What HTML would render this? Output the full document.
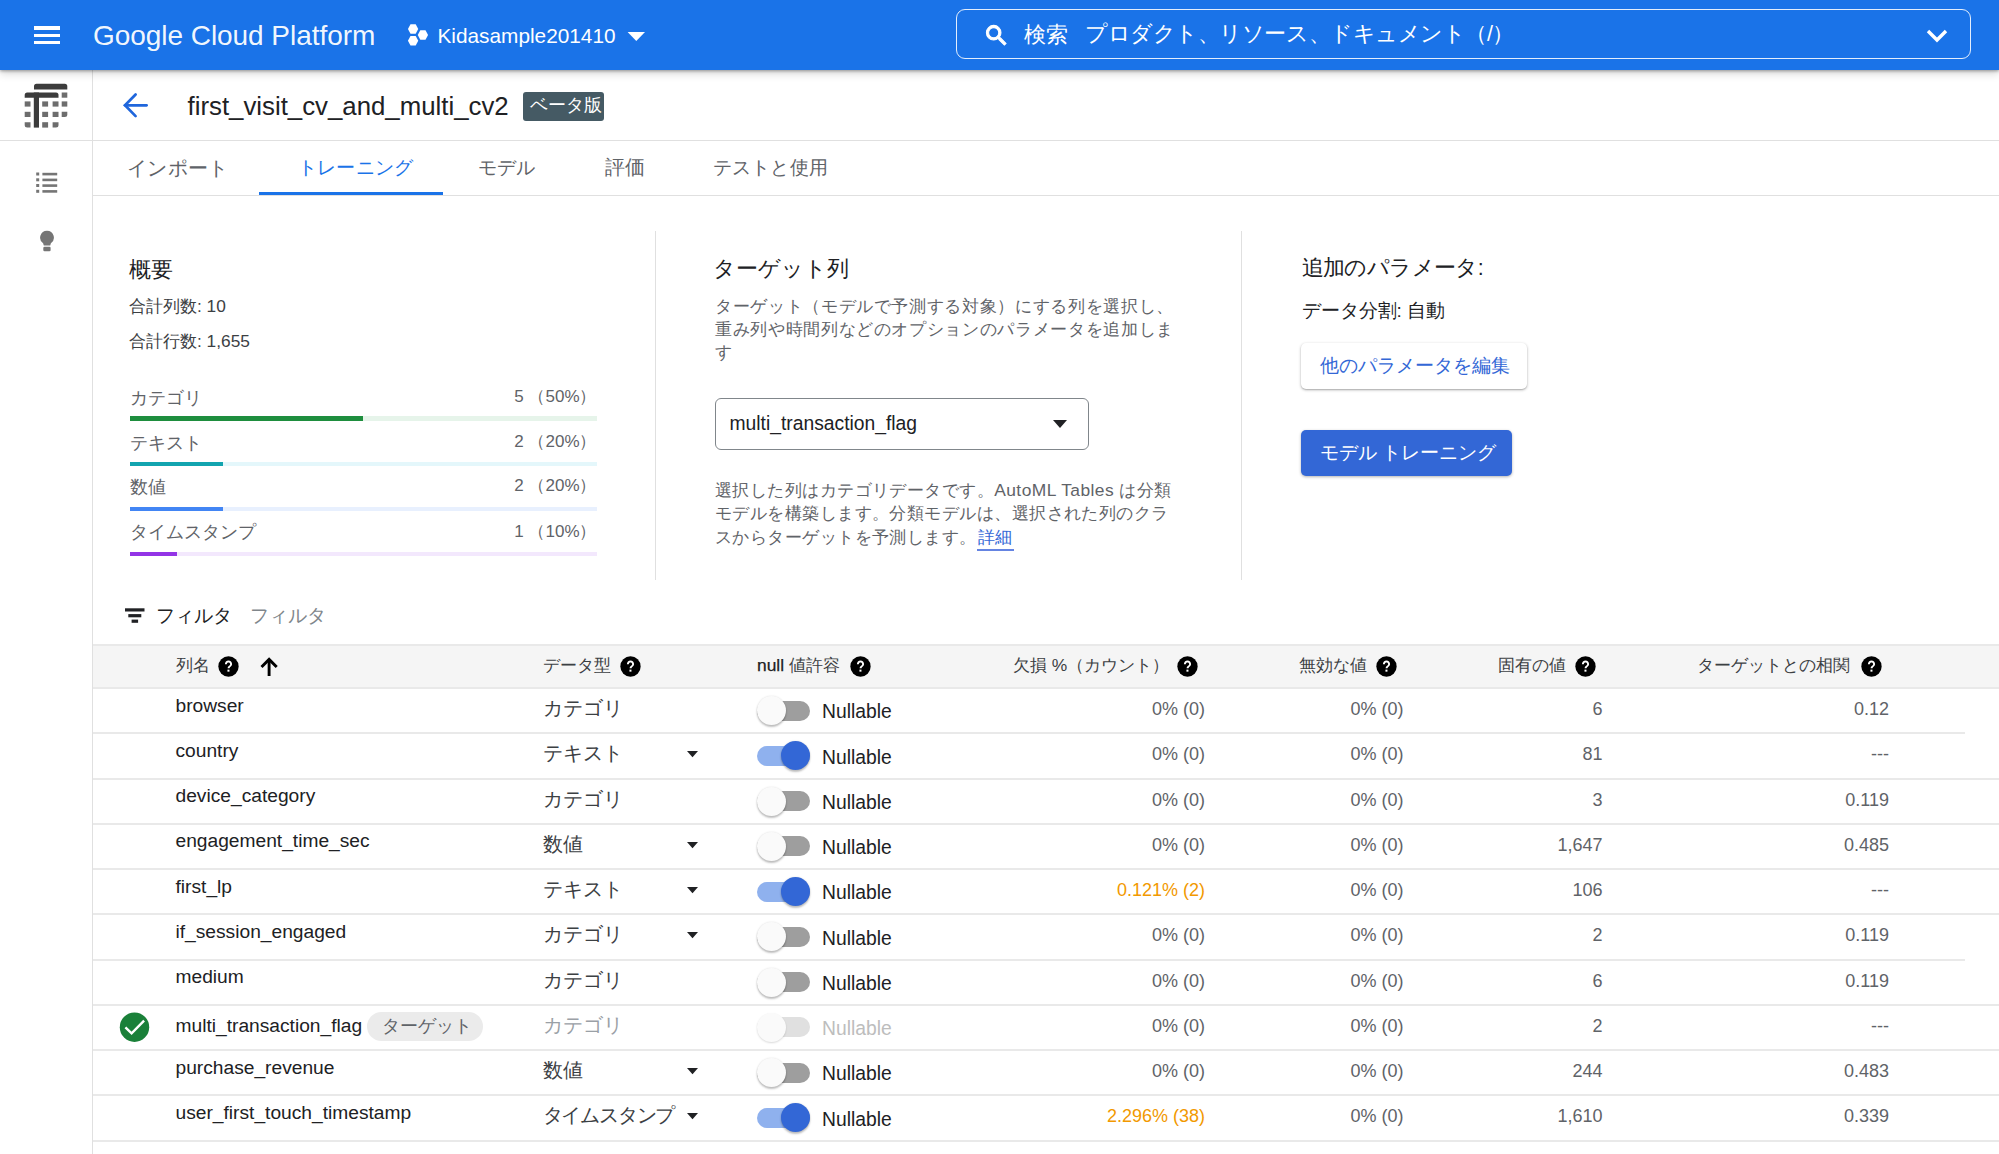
<!DOCTYPE html>
<html lang="ja"><head><meta charset="utf-8"><title>AutoML Tables</title>
<style>
html,body{margin:0;padding:0;width:1999px;height:1154px;overflow:hidden;background:#fff;font-family:'Liberation Sans',sans-serif;}
.t{position:absolute;white-space:nowrap;line-height:1;}
.r{position:absolute;}
</style></head><body>

<div class="r" style="left:0px;top:0px;width:1999px;height:70px;background:#1a73e8;box-shadow:0 1px 3px rgba(0,0,0,.35),0 4px 8px rgba(0,0,0,.15);z-index:5"></div>
<div class="r" style="left:0;top:0;width:1999px;height:70px;z-index:6">
<div class="r" style="left:33.6px;top:26.3px;width:26.4px;height:3.6px;background:#fff;"></div>
<div class="r" style="left:33.6px;top:33.6px;width:26.4px;height:3.6px;background:#fff;"></div>
<div class="r" style="left:33.6px;top:40.7px;width:26.4px;height:3.6px;background:#fff;"></div>
<div class="t" style="left:93px;top:22.2px;font-size:28px;color:rgba(255,255,255,.96);font-weight:400;letter-spacing:-0.05px">Google Cloud Platform</div>
<svg class="r" style="left:400px;top:18px;" width="40" height="34" viewBox="400 18 40 34"><g fill="#fff"><polygon points="407.95000000000005,29 410.5,24.2 415.70000000000005,24.2 418.25,29 415.70000000000005,33.8 410.5,33.8"/><polygon points="417.75,35 420.29999999999995,30.2 425.5,30.2 428.04999999999995,35 425.5,39.8 420.29999999999995,39.8"/><polygon points="407.95000000000005,40.8 410.5,36.0 415.70000000000005,36.0 418.25,40.8 415.70000000000005,45.599999999999994 410.5,45.599999999999994"/></g></svg>
<div class="t" style="left:437.5px;top:26.24px;font-size:20.8px;color:#fff;font-weight:400;">Kidasample201410</div>
<svg class="r" style="left:626px;top:30px;" width="20" height="12" viewBox="0 0 20 12"><polygon points="1.6,2 19,2 10.3,11" fill="#fff"/></svg>
<div class="r" style="left:956px;top:9px;width:1013px;height:48px;border:1.7px solid rgba(255,255,255,.88);border-radius:9px;"></div>
<svg class="r" style="left:983px;top:21.5px;" width="27" height="27" viewBox="0 0 24 24"><path fill="#fff" d="M15.5 14h-.79l-.28-.27A6.47 6.47 0 0 0 16 9.5 6.5 6.5 0 1 0 9.5 16c1.61 0 3.09-.59 4.23-1.57l.27.28v.79l5 4.99L20.49 19l-4.99-5zm-6 0C7.01 14 5 11.99 5 9.5S7.01 5 9.5 5 14 7.01 14 9.5 11.99 14 9.5 14z" stroke="#fff" stroke-width="0.9"/></svg>
<div class="t" style="left:1024px;top:24px;font-size:21.9px;color:#fff;font-weight:400;">検索</div>
<div class="t" style="left:1085px;top:24px;font-size:21.5px;color:#fff;font-weight:400;letter-spacing:-0.45px">プロダクト、リソース、ドキュメント（/）</div>
<svg class="r" style="left:1924px;top:24px;" width="26" height="24" viewBox="0 0 26 24"><polyline points="4,7 13,16 22,7" fill="none" stroke="#fff" stroke-width="3.4"/></svg>
</div>
<div class="r" style="left:92px;top:70px;width:1.2px;height:1084px;background:#e0e0e0;"></div>
<div class="r" style="left:0px;top:140px;width:1999px;height:1.2px;background:#e0e0e0;"></div>
<svg class="r" style="left:20px;top:80px;" width="52" height="52" viewBox="20 80 52 52"><g fill="#3c3c3c">
<path d="M36.5 83.8h28.3a2.5 2.5 0 0 1 2.5 2.5v3.1h-33.3v-3.1a2.5 2.5 0 0 1 2.5-2.5z"/>
<path d="M27.2 92.5h28.8a2.5 2.5 0 0 1 2.5 2.5v2.7h-33.8v-2.7a2.5 2.5 0 0 1 2.5-2.5z"/>
<rect x="33.8" y="92.5" width="5.2" height="35.1"/>
</g><g fill="#6d6d6d">
<rect x="61.7" y="92.5" width="5.6" height="5.2"/>
<rect x="24.7" y="101.4" width="5.8" height="5.2"/><rect x="42.2" y="101.4" width="5.9" height="5.2"/><rect x="52.6" y="101.4" width="5.9" height="5.2"/><rect x="61.7" y="101.4" width="5.6" height="5.2"/>
<rect x="24.7" y="111.8" width="5.8" height="5.2"/><rect x="42.2" y="111.8" width="5.9" height="5.2"/><rect x="52.6" y="111.8" width="5.9" height="5.2"/><path d="M61.7 111.8h5.6v2.7a2.5 2.5 0 0 1-2.5 2.5h-3.1z"/>
<path d="M24.7 122.2h5.8v5.4h-3.3a2.5 2.5 0 0 1-2.5-2.5z"/><rect x="42.2" y="122.2" width="5.9" height="5.4"/><path d="M52.6 122.2h5.9v2.9a2.5 2.5 0 0 1-2.5 2.5h-3.4z"/>
</g></svg>
<svg class="r" style="left:36px;top:172px;" width="22" height="22" viewBox="0 0 22 22"><g fill="#757575"><rect x="0.2" y="0.5" width="3" height="3"/><rect x="6.4" y="0.8" width="14.8" height="2.6"/><rect x="0.2" y="6.3" width="3" height="3"/><rect x="6.4" y="6.6" width="14.8" height="2.6"/><rect x="0.2" y="12" width="3" height="3"/><rect x="6.4" y="12.3" width="14.8" height="2.6"/><rect x="0.2" y="17.8" width="3" height="3"/><rect x="6.4" y="18.1" width="14.8" height="2.6"/></g></svg>
<svg class="r" style="left:39px;top:230px;" width="16" height="22" viewBox="0 0 16 22"><g fill="#757575"><path d="M8 0.8a6.8 6.8 0 0 1 3.9 12.4l-0.7 2.2H4.8l-0.7-2.2A6.8 6.8 0 0 1 8 0.8z"/><rect x="4.3" y="16.8" width="7.3" height="4.4" rx="1.2"/></g></svg>
<svg class="r" style="left:118px;top:88px;" width="34" height="34" viewBox="118 88 34 34"><g fill="none" stroke="#1f66dc" stroke-width="2.7" stroke-linecap="round"><polyline points="135.6,94.5 125,105.3 135.6,116.1"/><line x1="125" y1="105.3" x2="146.6" y2="105.3"/></g></svg>
<div class="t" style="left:187.5px;top:93.59px;font-size:25.8px;color:#202124;font-weight:400;">first_visit_cv_and_multi_cv2</div>
<div class="r" style="left:523px;top:92px;width:81px;height:29px;background:#455a64;border-radius:3px"></div>
<div class="t" style="left:529.5px;top:96.5px;font-size:17.5px;color:#fff;font-weight:400;">ベータ版</div>
<div class="r" style="left:93px;top:195px;width:1906px;height:1.2px;background:#e0e0e0;"></div>
<div class="t" style="left:127px;top:157.5px;font-size:20px;color:#5f6368;font-weight:400;letter-spacing:0.3px">インポート</div>
<div class="t" style="left:297.5px;top:157.5px;font-size:19px;color:#1a73e8;font-weight:400;letter-spacing:0.35px">トレーニング</div>
<div class="t" style="left:477.5px;top:157.5px;font-size:19px;color:#5f6368;font-weight:400;letter-spacing:0px">モデル</div>
<div class="t" style="left:604.5px;top:157.5px;font-size:19.5px;color:#5f6368;font-weight:400;letter-spacing:0px">評価</div>
<div class="t" style="left:712.5px;top:157.5px;font-size:19px;color:#5f6368;font-weight:400;letter-spacing:0.25px">テストと使用</div>
<div class="r" style="left:258.7px;top:192px;width:184.6px;height:3.2px;background:#1a73e8;"></div>
<div class="r" style="left:655px;top:231px;width:1.2px;height:349px;background:#e0e0e0;"></div>
<div class="r" style="left:1241.2px;top:231px;width:1.2px;height:349px;background:#e0e0e0;"></div>
<div class="t" style="left:128.5px;top:258.5px;font-size:22px;color:#202124;font-weight:400;">概要</div>
<div class="t" style="left:129px;top:297.5px;font-size:17.3px;color:#3c4043;font-weight:400;">合計列数: 10</div>
<div class="t" style="left:129px;top:332.5px;font-size:17.3px;color:#3c4043;font-weight:400;">合計行数: 1,655</div>
<div class="t" style="left:129.5px;top:388.5px;font-size:18.4px;color:#5f6368;font-weight:400;">カテゴリ</div>
<div class="t" style="right:1402.5px;top:387.89px;font-size:17px;color:#5f6368;">5 （50%）</div>
<div class="r" style="left:130px;top:416.3px;width:466.5px;height:4.6px;background:#e6f4ea;"></div>
<div class="r" style="left:130px;top:416.3px;width:233.2px;height:4.6px;background:#1e8e3e;"></div>
<div class="t" style="left:129.5px;top:433.5px;font-size:18.4px;color:#5f6368;font-weight:400;">テキスト</div>
<div class="t" style="right:1402.5px;top:432.89px;font-size:17px;color:#5f6368;">2 （20%）</div>
<div class="r" style="left:130px;top:461.9px;width:466.5px;height:4.6px;background:#e4f7fb;"></div>
<div class="r" style="left:130px;top:461.9px;width:93.3px;height:4.6px;background:#12a4af;"></div>
<div class="t" style="left:129.5px;top:478px;font-size:18.4px;color:#5f6368;font-weight:400;">数値</div>
<div class="t" style="right:1402.5px;top:477.39px;font-size:17px;color:#5f6368;">2 （20%）</div>
<div class="r" style="left:130px;top:506.7px;width:466.5px;height:4.6px;background:#e8f0fe;"></div>
<div class="r" style="left:130px;top:506.7px;width:93.3px;height:4.6px;background:#4285f4;"></div>
<div class="t" style="left:129.5px;top:522.5px;font-size:18.4px;color:#5f6368;font-weight:400;">タイムスタンプ</div>
<div class="t" style="right:1402.5px;top:523.39px;font-size:17px;color:#5f6368;">1 （10%）</div>
<div class="r" style="left:130px;top:551.6px;width:466.5px;height:4.6px;background:#f3e8fd;"></div>
<div class="r" style="left:130px;top:551.6px;width:46.7px;height:4.6px;background:#9334e6;"></div>
<div class="t" style="left:712.5px;top:258.5px;font-size:21.5px;color:#202124;font-weight:400;">ターゲット列</div>
<div class="t" style="left:715px;top:297.5px;font-size:17px;color:#5f6368;font-weight:400;letter-spacing:0.65px">ターゲット（モデルで予測する対象）にする列を選択し、</div>
<div class="t" style="left:715px;top:320.7px;font-size:17px;color:#5f6368;font-weight:400;letter-spacing:0.65px">重み列や時間列などのオプションのパラメータを追加しま</div>
<div class="t" style="left:715px;top:343.9px;font-size:17px;color:#5f6368;font-weight:400;letter-spacing:0.65px">す</div>
<div class="r" style="left:715px;top:398px;width:372px;height:49.6px;border:1.2px solid #80868b;border-radius:6px;"></div>
<div class="t" style="left:729.5px;top:413.98px;font-size:19.3px;color:#202124;font-weight:400;">multi_transaction_flag</div>
<svg class="r" style="left:1050px;top:418px;" width="20" height="12" viewBox="0 0 20 12"><polygon points="3,2 17,2 10,10" fill="#202124"/></svg>
<div class="t" style="left:715px;top:482.0px;font-size:17.4px;color:#5f6368;font-weight:400;letter-spacing:0.45px">選択した列はカテゴリデータです。AutoML Tables は分類</div>
<div class="t" style="left:715px;top:505.4px;font-size:17.4px;color:#5f6368;font-weight:400;letter-spacing:0.45px">モデルを構築します。分類モデルは、選択された列のクラ</div>
<div class="t" style="left:715px;top:528.8px;font-size:17.4px;color:#5f6368;font-weight:400;letter-spacing:0.45px">スからターゲットを予測します。<span style="color:#3367d6;border-bottom:2px solid #6584e2;padding-bottom:2.5px;padding-left:1px;padding-right:1px">詳細</span></div>
<div class="t" style="left:1301.5px;top:258px;font-size:21.5px;color:#202124;font-weight:400;letter-spacing:-0.6px">追加のパラメータ:</div>
<div class="t" style="left:1301.5px;top:300.5px;font-size:19px;color:#202124;font-weight:400;">データ分割: 自動</div>
<div class="r" style="left:1301px;top:343px;width:225.5px;height:46px;background:#fff;border-radius:5px;box-shadow:0 1px 3px rgba(0,0,0,.3),0 1px 1px rgba(0,0,0,.1);"></div>
<div class="t" style="left:1319.5px;top:356px;font-size:19px;color:#3367d6;font-weight:400;">他のパラメータを編集</div>
<div class="r" style="left:1301px;top:430px;width:210.5px;height:46px;background:#3367d6;border-radius:5px;box-shadow:0 1px 3px rgba(0,0,0,.3);"></div>
<div class="t" style="left:1319.5px;top:443px;font-size:19px;color:#fff;font-weight:400;">モデル トレーニング</div>
<svg class="r" style="left:124px;top:606px;" width="22" height="18" viewBox="0 0 22 18"><g fill="#202124"><rect x="1" y="2.3" width="19.5" height="3.2"/><rect x="4.3" y="8.1" width="13" height="3.2"/><rect x="7.6" y="13.6" width="6.5" height="3.2"/></g></svg>
<div class="t" style="left:155.5px;top:605.5px;font-size:19.2px;color:#202124;font-weight:400;">フィルタ</div>
<div class="t" style="left:249.5px;top:605.5px;font-size:19.2px;color:#80868b;font-weight:400;">フィルタ</div>
<div class="r" style="left:93px;top:644.5px;width:1906px;height:43.5px;background:#f5f5f5;"></div>
<div class="r" style="left:93px;top:644px;width:1906px;height:2px;background:#e9e9e9;"></div>
<div class="r" style="left:93px;top:687px;width:1906px;height:2px;background:#e9e9e9;"></div>
<div class="t" style="left:176px;top:657px;font-size:17.4px;color:#3c4043;font-weight:400;">列名</div>
<svg class="r" style="left:218px;top:656px;" width="21" height="21" viewBox="0 0 24 24"><circle cx="12" cy="12" r="11.6" fill="#000"/><path fill="#fff" d="M12 5.2c-2.3 0-4.1 1.8-4.1 4.1h2.2c0-1.1.9-1.9 1.9-1.9s1.9.8 1.9 1.9c0 1.9-2.9 1.7-2.9 4.8h2.2c0-2.1 2.9-2.4 2.9-4.8 0-2.3-1.8-4.1-4.1-4.1z"/><rect x="10.8" y="15.6" width="2.3" height="2.3" fill="#fff"/></svg>
<div class="t" style="left:543px;top:657px;font-size:17.4px;color:#3c4043;font-weight:400;">データ型</div>
<svg class="r" style="left:619.5px;top:656px;" width="21" height="21" viewBox="0 0 24 24"><circle cx="12" cy="12" r="11.6" fill="#000"/><path fill="#fff" d="M12 5.2c-2.3 0-4.1 1.8-4.1 4.1h2.2c0-1.1.9-1.9 1.9-1.9s1.9.8 1.9 1.9c0 1.9-2.9 1.7-2.9 4.8h2.2c0-2.1 2.9-2.4 2.9-4.8 0-2.3-1.8-4.1-4.1-4.1z"/><rect x="10.8" y="15.6" width="2.3" height="2.3" fill="#fff"/></svg>
<div class="t" style="left:757px;top:657px;font-size:17.4px;color:#3c4043;font-weight:400;"><span style="color:#202124;-webkit-text-stroke:0.25px #202124">null</span> 値許容</div>
<svg class="r" style="left:850px;top:656px;" width="21" height="21" viewBox="0 0 24 24"><circle cx="12" cy="12" r="11.6" fill="#000"/><path fill="#fff" d="M12 5.2c-2.3 0-4.1 1.8-4.1 4.1h2.2c0-1.1.9-1.9 1.9-1.9s1.9.8 1.9 1.9c0 1.9-2.9 1.7-2.9 4.8h2.2c0-2.1 2.9-2.4 2.9-4.8 0-2.3-1.8-4.1-4.1-4.1z"/><rect x="10.8" y="15.6" width="2.3" height="2.3" fill="#fff"/></svg>
<div class="t" style="left:1013px;top:657px;font-size:17.4px;color:#3c4043;font-weight:400;">欠損 %（カウント）</div>
<svg class="r" style="left:1177px;top:656px;" width="21" height="21" viewBox="0 0 24 24"><circle cx="12" cy="12" r="11.6" fill="#000"/><path fill="#fff" d="M12 5.2c-2.3 0-4.1 1.8-4.1 4.1h2.2c0-1.1.9-1.9 1.9-1.9s1.9.8 1.9 1.9c0 1.9-2.9 1.7-2.9 4.8h2.2c0-2.1 2.9-2.4 2.9-4.8 0-2.3-1.8-4.1-4.1-4.1z"/><rect x="10.8" y="15.6" width="2.3" height="2.3" fill="#fff"/></svg>
<div class="t" style="left:1298.5px;top:657px;font-size:17.4px;color:#3c4043;font-weight:400;">無効な値</div>
<svg class="r" style="left:1376px;top:656px;" width="21" height="21" viewBox="0 0 24 24"><circle cx="12" cy="12" r="11.6" fill="#000"/><path fill="#fff" d="M12 5.2c-2.3 0-4.1 1.8-4.1 4.1h2.2c0-1.1.9-1.9 1.9-1.9s1.9.8 1.9 1.9c0 1.9-2.9 1.7-2.9 4.8h2.2c0-2.1 2.9-2.4 2.9-4.8 0-2.3-1.8-4.1-4.1-4.1z"/><rect x="10.8" y="15.6" width="2.3" height="2.3" fill="#fff"/></svg>
<div class="t" style="left:1497.5px;top:657px;font-size:17.4px;color:#3c4043;font-weight:400;">固有の値</div>
<svg class="r" style="left:1575px;top:656px;" width="21" height="21" viewBox="0 0 24 24"><circle cx="12" cy="12" r="11.6" fill="#000"/><path fill="#fff" d="M12 5.2c-2.3 0-4.1 1.8-4.1 4.1h2.2c0-1.1.9-1.9 1.9-1.9s1.9.8 1.9 1.9c0 1.9-2.9 1.7-2.9 4.8h2.2c0-2.1 2.9-2.4 2.9-4.8 0-2.3-1.8-4.1-4.1-4.1z"/><rect x="10.8" y="15.6" width="2.3" height="2.3" fill="#fff"/></svg>
<div class="t" style="left:1696.5px;top:657px;font-size:17.4px;color:#3c4043;font-weight:400;">ターゲットとの相関</div>
<svg class="r" style="left:1861px;top:656px;" width="21" height="21" viewBox="0 0 24 24"><circle cx="12" cy="12" r="11.6" fill="#000"/><path fill="#fff" d="M12 5.2c-2.3 0-4.1 1.8-4.1 4.1h2.2c0-1.1.9-1.9 1.9-1.9s1.9.8 1.9 1.9c0 1.9-2.9 1.7-2.9 4.8h2.2c0-2.1 2.9-2.4 2.9-4.8 0-2.3-1.8-4.1-4.1-4.1z"/><rect x="10.8" y="15.6" width="2.3" height="2.3" fill="#fff"/></svg>
<svg class="r" style="left:256px;top:652px;" width="26" height="28" viewBox="256 652 26 28"><g fill="none" stroke="#000" stroke-width="2.9"><polyline points="261.5,667 269.1,659.4 276.7,667"/><line x1="269.1" y1="659.5" x2="269.1" y2="676"/></g></svg>
<div class="r" style="left:93px;top:732px;width:1872px;height:2px;background:#e9e9e9;"></div>
<div class="t" style="left:175.5px;top:695.66px;font-size:19.2px;color:#202124;font-weight:400;">browser</div>
<div class="t" style="left:542.5px;top:698.0px;font-size:20px;color:#3c4043;font-weight:400;">カテゴリ</div>
<div class="r" style="left:757px;top:700.5px;width:52.5px;height:20px;background:#9e9e9e;border-radius:10px"></div>
<div class="r" style="left:756.5px;top:696.00px;width:29px;height:29px;border-radius:50%;background:#fafafa;box-shadow:0 2px 2px rgba(0,0,0,.24),0 0 2px rgba(0,0,0,.12)"></div>
<div class="t" style="left:822px;top:702.38px;font-size:19.3px;color:#202124;font-weight:400;">Nullable</div>
<div class="t" style="right:794px;top:700.06px;font-size:18px;color:#5f6368;">0% (0)</div>
<div class="t" style="right:595.5px;top:700.06px;font-size:18px;color:#5f6368;">0% (0)</div>
<div class="t" style="right:396.5px;top:700.06px;font-size:18px;color:#5f6368;">6</div>
<div class="t" style="right:110px;top:700.06px;font-size:18px;color:#5f6368;">0.12</div>
<div class="r" style="left:93px;top:778px;width:1906px;height:2px;background:#e9e9e9;"></div>
<div class="t" style="left:175.5px;top:740.92px;font-size:19.2px;color:#202124;font-weight:400;">country</div>
<div class="t" style="left:542.5px;top:743.26px;font-size:20px;color:#3c4043;font-weight:400;">テキスト</div>
<svg class="r" style="left:684px;top:748.26px;" width="17" height="12" viewBox="0 0 17 12"><polygon points="3,3 14,3 8.5,9.2" fill="#202124"/></svg>
<div class="r" style="left:757px;top:745.76px;width:52.5px;height:20px;background:#8fb1ee;border-radius:10px"></div>
<div class="r" style="left:780.5px;top:741.26px;width:29px;height:29px;border-radius:50%;background:#3367d6;box-shadow:0 2px 2px rgba(0,0,0,.24),0 0 2px rgba(0,0,0,.12)"></div>
<div class="t" style="left:822px;top:747.64px;font-size:19.3px;color:#202124;font-weight:400;">Nullable</div>
<div class="t" style="right:794px;top:745.32px;font-size:18px;color:#5f6368;">0% (0)</div>
<div class="t" style="right:595.5px;top:745.32px;font-size:18px;color:#5f6368;">0% (0)</div>
<div class="t" style="right:396.5px;top:745.32px;font-size:18px;color:#5f6368;">81</div>
<div class="t" style="right:110px;top:745.32px;font-size:18px;color:#5f6368;">---</div>
<div class="r" style="left:93px;top:823px;width:1906px;height:2px;background:#e9e9e9;"></div>
<div class="t" style="left:175.5px;top:786.18px;font-size:19.2px;color:#202124;font-weight:400;">device_category</div>
<div class="t" style="left:542.5px;top:788.52px;font-size:20px;color:#3c4043;font-weight:400;">カテゴリ</div>
<div class="r" style="left:757px;top:791.02px;width:52.5px;height:20px;background:#9e9e9e;border-radius:10px"></div>
<div class="r" style="left:756.5px;top:786.52px;width:29px;height:29px;border-radius:50%;background:#fafafa;box-shadow:0 2px 2px rgba(0,0,0,.24),0 0 2px rgba(0,0,0,.12)"></div>
<div class="t" style="left:822px;top:792.9px;font-size:19.3px;color:#202124;font-weight:400;">Nullable</div>
<div class="t" style="right:794px;top:790.58px;font-size:18px;color:#5f6368;">0% (0)</div>
<div class="t" style="right:595.5px;top:790.58px;font-size:18px;color:#5f6368;">0% (0)</div>
<div class="t" style="right:396.5px;top:790.58px;font-size:18px;color:#5f6368;">3</div>
<div class="t" style="right:110px;top:790.58px;font-size:18px;color:#5f6368;">0.119</div>
<div class="r" style="left:93px;top:868px;width:1906px;height:2px;background:#e9e9e9;"></div>
<div class="t" style="left:175.5px;top:831.44px;font-size:19.2px;color:#202124;font-weight:400;">engagement_time_sec</div>
<div class="t" style="left:542.5px;top:833.78px;font-size:20px;color:#3c4043;font-weight:400;">数値</div>
<svg class="r" style="left:684px;top:838.78px;" width="17" height="12" viewBox="0 0 17 12"><polygon points="3,3 14,3 8.5,9.2" fill="#202124"/></svg>
<div class="r" style="left:757px;top:836.28px;width:52.5px;height:20px;background:#9e9e9e;border-radius:10px"></div>
<div class="r" style="left:756.5px;top:831.78px;width:29px;height:29px;border-radius:50%;background:#fafafa;box-shadow:0 2px 2px rgba(0,0,0,.24),0 0 2px rgba(0,0,0,.12)"></div>
<div class="t" style="left:822px;top:838.16px;font-size:19.3px;color:#202124;font-weight:400;">Nullable</div>
<div class="t" style="right:794px;top:835.84px;font-size:18px;color:#5f6368;">0% (0)</div>
<div class="t" style="right:595.5px;top:835.84px;font-size:18px;color:#5f6368;">0% (0)</div>
<div class="t" style="right:396.5px;top:835.84px;font-size:18px;color:#5f6368;">1,647</div>
<div class="t" style="right:110px;top:835.84px;font-size:18px;color:#5f6368;">0.485</div>
<div class="r" style="left:93px;top:913px;width:1906px;height:2px;background:#e9e9e9;"></div>
<div class="t" style="left:175.5px;top:876.7px;font-size:19.2px;color:#202124;font-weight:400;">first_lp</div>
<div class="t" style="left:542.5px;top:879.04px;font-size:20px;color:#3c4043;font-weight:400;">テキスト</div>
<svg class="r" style="left:684px;top:884.04px;" width="17" height="12" viewBox="0 0 17 12"><polygon points="3,3 14,3 8.5,9.2" fill="#202124"/></svg>
<div class="r" style="left:757px;top:881.54px;width:52.5px;height:20px;background:#8fb1ee;border-radius:10px"></div>
<div class="r" style="left:780.5px;top:877.04px;width:29px;height:29px;border-radius:50%;background:#3367d6;box-shadow:0 2px 2px rgba(0,0,0,.24),0 0 2px rgba(0,0,0,.12)"></div>
<div class="t" style="left:822px;top:883.42px;font-size:19.3px;color:#202124;font-weight:400;">Nullable</div>
<div class="t" style="right:794px;top:881.1px;font-size:18px;color:#f29900;">0.121% (2)</div>
<div class="t" style="right:595.5px;top:881.1px;font-size:18px;color:#5f6368;">0% (0)</div>
<div class="t" style="right:396.5px;top:881.1px;font-size:18px;color:#5f6368;">106</div>
<div class="t" style="right:110px;top:881.1px;font-size:18px;color:#5f6368;">---</div>
<div class="r" style="left:93px;top:959px;width:1872px;height:2px;background:#e9e9e9;"></div>
<div class="t" style="left:175.5px;top:921.96px;font-size:19.2px;color:#202124;font-weight:400;">if_session_engaged</div>
<div class="t" style="left:542.5px;top:924.3px;font-size:20px;color:#3c4043;font-weight:400;">カテゴリ</div>
<svg class="r" style="left:684px;top:929.3px;" width="17" height="12" viewBox="0 0 17 12"><polygon points="3,3 14,3 8.5,9.2" fill="#202124"/></svg>
<div class="r" style="left:757px;top:926.8px;width:52.5px;height:20px;background:#9e9e9e;border-radius:10px"></div>
<div class="r" style="left:756.5px;top:922.30px;width:29px;height:29px;border-radius:50%;background:#fafafa;box-shadow:0 2px 2px rgba(0,0,0,.24),0 0 2px rgba(0,0,0,.12)"></div>
<div class="t" style="left:822px;top:928.68px;font-size:19.3px;color:#202124;font-weight:400;">Nullable</div>
<div class="t" style="right:794px;top:926.36px;font-size:18px;color:#5f6368;">0% (0)</div>
<div class="t" style="right:595.5px;top:926.36px;font-size:18px;color:#5f6368;">0% (0)</div>
<div class="t" style="right:396.5px;top:926.36px;font-size:18px;color:#5f6368;">2</div>
<div class="t" style="right:110px;top:926.36px;font-size:18px;color:#5f6368;">0.119</div>
<div class="r" style="left:93px;top:1004px;width:1906px;height:2px;background:#e9e9e9;"></div>
<div class="t" style="left:175.5px;top:967.22px;font-size:19.2px;color:#202124;font-weight:400;">medium</div>
<div class="t" style="left:542.5px;top:969.56px;font-size:20px;color:#3c4043;font-weight:400;">カテゴリ</div>
<div class="r" style="left:757px;top:972.06px;width:52.5px;height:20px;background:#9e9e9e;border-radius:10px"></div>
<div class="r" style="left:756.5px;top:967.56px;width:29px;height:29px;border-radius:50%;background:#fafafa;box-shadow:0 2px 2px rgba(0,0,0,.24),0 0 2px rgba(0,0,0,.12)"></div>
<div class="t" style="left:822px;top:973.94px;font-size:19.3px;color:#202124;font-weight:400;">Nullable</div>
<div class="t" style="right:794px;top:971.62px;font-size:18px;color:#5f6368;">0% (0)</div>
<div class="t" style="right:595.5px;top:971.62px;font-size:18px;color:#5f6368;">0% (0)</div>
<div class="t" style="right:396.5px;top:971.62px;font-size:18px;color:#5f6368;">6</div>
<div class="t" style="right:110px;top:971.62px;font-size:18px;color:#5f6368;">0.119</div>
<div class="r" style="left:93px;top:1049px;width:1906px;height:2px;background:#e9e9e9;"></div>
<div class="t" style="left:175.5px;top:1016.48px;font-size:19.2px;color:#202124;font-weight:400;">multi_transaction_flag</div>
<div class="r" style="left:367px;top:1012.02px;width:116px;height:29.2px;border-radius:15px;background:#ebebeb;"></div>
<div class="t" style="left:382px;top:1017.1199999999999px;font-size:18px;color:#5f6368;font-weight:400;">ターゲット</div>
<svg class="r" style="left:117px;top:1009.82px;" width="35" height="35" viewBox="117 1009.82 35 35"><circle cx="134.5" cy="1027.02" r="14.7" fill="#1a8039"/><polyline points="125.4,1027.12 131.6,1033.22 144.1,1020.52" fill="none" stroke="#fff" stroke-width="2.4"/></svg>
<div class="t" style="left:542.5px;top:1014.8199999999999px;font-size:20px;color:#9aa0a6;font-weight:400;">カテゴリ</div>
<div class="r" style="left:757px;top:1017.32px;width:52.5px;height:20px;background:#e0e0e0;border-radius:10px"></div>
<div class="r" style="left:756.5px;top:1012.82px;width:29px;height:29px;border-radius:50%;background:#fafafa;box-shadow:0 1px 2px rgba(0,0,0,.15)"></div>
<div class="t" style="left:822px;top:1019.2px;font-size:19.3px;color:#bdbdbd;font-weight:400;">Nullable</div>
<div class="t" style="right:794px;top:1016.88px;font-size:18px;color:#5f6368;">0% (0)</div>
<div class="t" style="right:595.5px;top:1016.88px;font-size:18px;color:#5f6368;">0% (0)</div>
<div class="t" style="right:396.5px;top:1016.88px;font-size:18px;color:#5f6368;">2</div>
<div class="t" style="right:110px;top:1016.88px;font-size:18px;color:#5f6368;">---</div>
<div class="r" style="left:93px;top:1094px;width:1906px;height:2px;background:#e9e9e9;"></div>
<div class="t" style="left:175.5px;top:1057.74px;font-size:19.2px;color:#202124;font-weight:400;">purchase_revenue</div>
<div class="t" style="left:542.5px;top:1060.08px;font-size:20px;color:#3c4043;font-weight:400;">数値</div>
<svg class="r" style="left:684px;top:1065.08px;" width="17" height="12" viewBox="0 0 17 12"><polygon points="3,3 14,3 8.5,9.2" fill="#202124"/></svg>
<div class="r" style="left:757px;top:1062.58px;width:52.5px;height:20px;background:#9e9e9e;border-radius:10px"></div>
<div class="r" style="left:756.5px;top:1058.08px;width:29px;height:29px;border-radius:50%;background:#fafafa;box-shadow:0 2px 2px rgba(0,0,0,.24),0 0 2px rgba(0,0,0,.12)"></div>
<div class="t" style="left:822px;top:1064.46px;font-size:19.3px;color:#202124;font-weight:400;">Nullable</div>
<div class="t" style="right:794px;top:1062.14px;font-size:18px;color:#5f6368;">0% (0)</div>
<div class="t" style="right:595.5px;top:1062.14px;font-size:18px;color:#5f6368;">0% (0)</div>
<div class="t" style="right:396.5px;top:1062.14px;font-size:18px;color:#5f6368;">244</div>
<div class="t" style="right:110px;top:1062.14px;font-size:18px;color:#5f6368;">0.483</div>
<div class="r" style="left:93px;top:1140px;width:1906px;height:2px;background:#e9e9e9;"></div>
<div class="t" style="left:175.5px;top:1103.0px;font-size:19.2px;color:#202124;font-weight:400;">user_first_touch_timestamp</div>
<div class="t" style="left:542.5px;top:1105.34px;font-size:20px;color:#3c4043;font-weight:400;letter-spacing:-1.2px">タイムスタンプ</div>
<svg class="r" style="left:684px;top:1110.34px;" width="17" height="12" viewBox="0 0 17 12"><polygon points="3,3 14,3 8.5,9.2" fill="#202124"/></svg>
<div class="r" style="left:757px;top:1107.84px;width:52.5px;height:20px;background:#8fb1ee;border-radius:10px"></div>
<div class="r" style="left:780.5px;top:1103.34px;width:29px;height:29px;border-radius:50%;background:#3367d6;box-shadow:0 2px 2px rgba(0,0,0,.24),0 0 2px rgba(0,0,0,.12)"></div>
<div class="t" style="left:822px;top:1109.72px;font-size:19.3px;color:#202124;font-weight:400;">Nullable</div>
<div class="t" style="right:794px;top:1107.4px;font-size:18px;color:#f29900;">2.296% (38)</div>
<div class="t" style="right:595.5px;top:1107.4px;font-size:18px;color:#5f6368;">0% (0)</div>
<div class="t" style="right:396.5px;top:1107.4px;font-size:18px;color:#5f6368;">1,610</div>
<div class="t" style="right:110px;top:1107.4px;font-size:18px;color:#5f6368;">0.339</div>
</body></html>
